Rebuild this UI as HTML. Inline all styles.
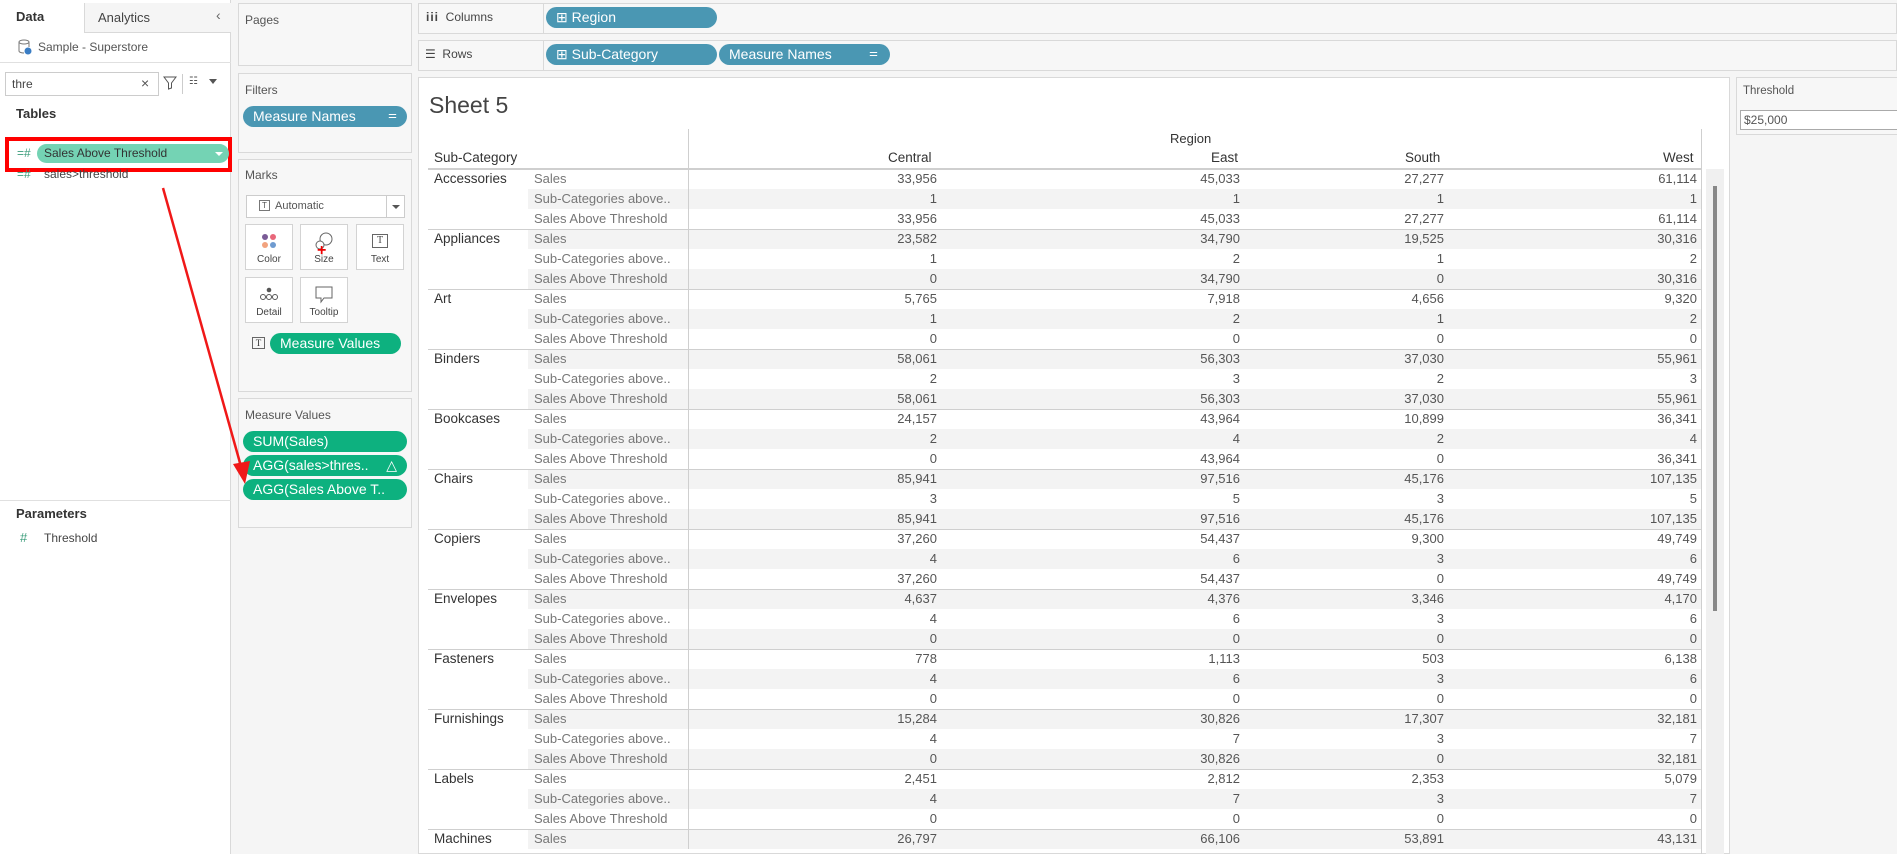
<!DOCTYPE html>
<html><head><meta charset="utf-8"><style>
*{box-sizing:border-box;margin:0;padding:0}
body{width:1897px;height:854px;overflow:hidden;background:#f5f5f5;font-family:"Liberation Sans",sans-serif;color:#333;position:relative}
.a{position:absolute}
.box{position:absolute;background:#f7f7f7;border:1px solid #d9d9d9}
.lbl{position:absolute;font-size:12px;color:#555}
.pill{position:absolute;border-radius:11px;color:#fff;font-size:14px;line-height:20px;padding-left:10px;white-space:nowrap;overflow:hidden}
.blue{background:#4a97b3}
.green{background:#0db17f}
.btn{position:absolute;width:48px;height:46px;border:1px solid #d3d3d3;background:#fff;font-size:10px;color:#444;text-align:center}
.btn span{position:absolute;bottom:4px;left:0;right:0}
table{position:absolute;left:428px;top:169px;border-collapse:collapse;table-layout:fixed;font-size:13px}
td{height:20px;padding:0 4px;white-space:nowrap;overflow:hidden;line-height:20px}
td.c{vertical-align:top;color:#333;font-size:13.5px;padding-left:6px;background:#fff}
td.m{color:#777;padding-left:6px}
td.n{text-align:right;color:#555}
tr.g td.m,tr.g td.n{background:#f3f3f3}
tr.f td{box-shadow:inset 0 1px #cfcfcf}
td.v{box-shadow:inset 1px 0 #cfcfcf}
tr.f td.v{box-shadow:inset 1px 1px #cfcfcf}
</style></head><body>
<!-- left panel -->
<div class="a" style="left:0;top:0;width:231px;height:854px;background:#fff;border-right:1px solid #d9d9d9"></div>
<div class="a" style="left:84px;top:3px;width:147px;height:30px;background:#f5f5f5;border-left:1px solid #d9d9d9;border-bottom:1px solid #d9d9d9"></div>
<div class="a" style="left:16px;top:9px;font-size:13px;font-weight:bold">Data</div>
<div class="a" style="left:98px;top:10px;font-size:13px;color:#444">Analytics</div>
<div class="a" style="left:216px;top:7px;font-size:14px;color:#666">‹</div>
<div class="a" style="left:0;top:62px;width:231px;height:1px;background:#e0e0e0"></div>
<svg class="a" style="left:18px;top:39px" width="14" height="16"><ellipse cx="6" cy="3" rx="5" ry="2" fill="none" stroke="#777"/><path d="M1 3v9c0 1 2 2 5 2M11 3v5" fill="none" stroke="#777"/><circle cx="10" cy="12" r="3.5" fill="#3a7dc4"/></svg>
<div class="a" style="left:38px;top:40px;font-size:12px;color:#555">Sample - Superstore</div>
<div class="a" style="left:5px;top:72px;width:154px;height:24px;border:1px solid #ccc;background:#fff"></div>
<div class="a" style="left:12px;top:77px;font-size:12px;color:#444">thre</div>
<div class="a" style="left:141px;top:75px;font-size:14px;color:#555">×</div>
<svg class="a" style="left:163px;top:76px" width="14" height="14"><path d="M1 1h12L8.5 7v5l-3 1V7z" fill="none" stroke="#555"/></svg>
<div class="a" style="left:182px;top:74px;width:1px;height:20px;background:#ccc"></div>
<div class="a" style="left:189px;top:76px;font-size:10px;color:#555;letter-spacing:-1px">☷</div>
<div class="a" style="left:209px;top:79px;width:0;height:0;border:4px solid transparent;border-top:5px solid #555"></div>
<div class="a" style="left:16px;top:106px;font-size:13px;font-weight:bold">Tables</div>
<div class="a" style="left:5px;top:137px;width:227px;height:35px;border:4px solid #f00"></div>
<div class="a" style="left:17px;top:146px;font-size:12px;color:#3a9c7a">=#</div>
<div class="a" style="left:37px;top:144px;width:192px;height:19px;border-radius:10px;background:#74d3b4;font-size:12px;line-height:19px;padding-left:7px;color:#333">Sales Above Threshold</div>
<div class="a" style="left:215px;top:152px;width:0;height:0;border:4px solid transparent;border-top:4px solid #fff"></div>
<div class="a" style="left:17px;top:167px;font-size:12px;color:#3a9c7a">=#</div>
<div class="a" style="left:44px;top:167px;font-size:12px;color:#444">sales&gt;threshold</div>
<div class="a" style="left:0;top:500px;width:231px;height:1px;background:#e0e0e0"></div>
<div class="a" style="left:16px;top:506px;font-size:13px;font-weight:bold">Parameters</div>
<div class="a" style="left:20px;top:530px;font-size:13px;color:#3a9c7a">#</div>
<div class="a" style="left:44px;top:531px;font-size:12px;color:#444">Threshold</div>
<!-- middle -->
<div class="box" style="left:238px;top:3px;width:174px;height:63px"></div>
<div class="lbl" style="left:245px;top:13px">Pages</div>
<div class="box" style="left:238px;top:73px;width:174px;height:80px"></div>
<div class="lbl" style="left:245px;top:83px">Filters</div>
<div class="pill blue" style="left:243px;top:106px;width:164px;height:21px">Measure Names<span style="position:absolute;right:10px;font-size:10px">⚌</span></div>
<div class="box" style="left:238px;top:159px;width:174px;height:233px"></div>
<div class="lbl" style="left:245px;top:168px">Marks</div>
<div class="a" style="left:246px;top:195px;width:159px;height:23px;border:1px solid #ccc;background:#fff"></div>
<div class="a" style="left:386px;top:196px;width:1px;height:21px;background:#ccc"></div>
<div class="a" style="left:392px;top:205px;border:4px solid transparent;border-top:4px solid #555"></div>
<div class="a" style="left:259px;top:200px;width:11px;height:11px;border:1px solid #777;font-size:8px;text-align:center;line-height:9px;color:#555">T</div>
<div class="a" style="left:275px;top:200px;font-size:11px;color:#555">Automatic</div>
<div class="btn" style="left:245px;top:224px"><svg style="margin-top:8px" width="16" height="16"><circle cx="4" cy="4" r="3" fill="#7a5b96"/><circle cx="12" cy="4" r="3" fill="#e8677a"/><circle cx="4" cy="12" r="3" fill="#f2a37e"/><circle cx="12" cy="12" r="3" fill="#6f9bd0"/></svg><span>Color</span></div>
<div class="btn" style="left:300px;top:224px"><svg style="margin-top:7px" width="18" height="18"><circle cx="11" cy="7" r="6" fill="none" stroke="#666"/><circle cx="5" cy="13" r="4" fill="#fff" stroke="#666"/></svg><span>Size</span><div class="a" style="left:16px;top:21px;color:#e00;font-size:16px;font-weight:bold;line-height:10px">+</div></div>
<div class="btn" style="left:356px;top:224px"><div style="margin:9px auto 0;width:16px;height:14px;border:1.5px solid #666;font-size:10px;line-height:11px;font-family:'Liberation Serif',serif">T</div><span>Text</span></div>
<div class="btn" style="left:245px;top:277px"><svg style="margin-top:8px" width="20" height="16"><circle cx="10" cy="4" r="2.3" fill="#555"/><circle cx="4" cy="11" r="2.5" fill="none" stroke="#555"/><circle cx="10" cy="11" r="2.5" fill="none" stroke="#555"/><circle cx="16" cy="11" r="2.5" fill="none" stroke="#555"/></svg><span>Detail</span></div>
<div class="btn" style="left:300px;top:277px"><svg style="margin-top:8px" width="18" height="18"><path d="M1 1h16v11H9l-3 4v-4H1z" fill="none" stroke="#666"/></svg><span>Tooltip</span></div>
<div class="a" style="left:252px;top:337px;width:13px;height:12px;border:1px solid #666;font-size:9px;line-height:10px;text-align:center;font-family:'Liberation Serif',serif">T</div>
<div class="pill green" style="left:270px;top:333px;width:131px;height:21px">Measure Values</div>
<div class="box" style="left:238px;top:398px;width:174px;height:130px"></div>
<div class="lbl" style="left:245px;top:408px">Measure Values</div>
<div class="pill green" style="left:243px;top:431px;width:164px;height:21px">SUM(Sales)</div>
<div class="pill green" style="left:243px;top:455px;width:164px;height:21px">AGG(sales&gt;thres..<span style="position:absolute;right:10px">△</span></div>
<div class="pill green" style="left:243px;top:479px;width:164px;height:21px">AGG(Sales Above T..</div>
<svg class="a" style="left:0;top:0;z-index:5" width="300" height="500"><line x1="163" y1="188" x2="242" y2="470" stroke="#f01818" stroke-width="2.5"/><path d="M233 464l12 20l5-23z" fill="#f01818"/></svg>
<!-- shelves -->
<div class="a" style="left:418px;top:3px;width:1479px;height:31px;background:#f7f7f7;border:1px solid #d9d9d9"></div>
<div class="a" style="left:543px;top:3px;width:1px;height:31px;background:#d9d9d9"></div>
<div class="a" style="left:426px;top:10px;font-size:12px;color:#444"><b style="letter-spacing:1px">iii</b>&nbsp; Columns</div>
<div class="pill blue" style="left:546px;top:7px;width:171px;height:21px">⊞ Region</div>
<div class="a" style="left:418px;top:40px;width:1479px;height:31px;background:#f7f7f7;border:1px solid #d9d9d9"></div>
<div class="a" style="left:543px;top:40px;width:1px;height:31px;background:#d9d9d9"></div>
<div class="a" style="left:425px;top:47px;font-size:12px;color:#444">☰&nbsp; Rows</div>
<div class="pill blue" style="left:546px;top:44px;width:171px;height:21px">⊞ Sub-Category</div>
<div class="pill blue" style="left:719px;top:44px;width:171px;height:21px">Measure Names<span style="position:absolute;right:12px;font-size:10px">⚌</span></div>
<!-- sheet -->
<div class="a" style="left:418px;top:77px;width:1312px;height:777px;background:#fff;border:1px solid #d9d9d9"></div>
<div class="a" style="left:429px;top:92px;font-size:23px;color:#444">Sheet 5</div>
<div class="a" style="left:688px;top:129px;width:1px;height:40px;background:#cfcfcf"></div>
<div class="a" style="left:1701px;top:129px;width:1px;height:725px;background:#cfcfcf"></div>
<div class="a" style="left:1170px;top:131px;font-size:13px;color:#333">Region</div>
<div class="a" style="left:434px;top:150px;font-size:13.5px;color:#333">Sub-Category</div>
<div class="a" style="left:888px;top:150px;font-size:13.5px;color:#333">Central</div>
<div class="a" style="left:1211px;top:150px;font-size:13.5px;color:#333">East</div>
<div class="a" style="left:1405px;top:150px;font-size:13.5px;color:#333">South</div>
<div class="a" style="left:1663px;top:150px;font-size:13.5px;color:#333">West</div>
<div class="a" style="left:428px;top:168px;width:1273px;height:1px;background:#cfcfcf"></div>
<div class="a" style="left:1706px;top:169px;width:18px;height:685px;background:#f0f0f0"></div>
<div class="a" style="left:1713px;top:186px;width:4px;height:425px;background:#888"></div>
<table>
<colgroup><col style="width:100px"><col style="width:160px"><col style="width:253px"><col style="width:303px"><col style="width:204px"><col style="width:253px"></colgroup>
<tr class="f"><td class="c" rowspan="3">Accessories</td><td class="m">Sales</td><td class="n v">33,956</td><td class="n">45,033</td><td class="n">27,277</td><td class="n">61,114</td></tr>
<tr class="g"><td class="m">Sub-Categories above..</td><td class="n v">1</td><td class="n">1</td><td class="n">1</td><td class="n">1</td></tr>
<tr><td class="m">Sales Above Threshold</td><td class="n v">33,956</td><td class="n">45,033</td><td class="n">27,277</td><td class="n">61,114</td></tr>
<tr class="f g"><td class="c" rowspan="3">Appliances</td><td class="m">Sales</td><td class="n v">23,582</td><td class="n">34,790</td><td class="n">19,525</td><td class="n">30,316</td></tr>
<tr><td class="m">Sub-Categories above..</td><td class="n v">1</td><td class="n">2</td><td class="n">1</td><td class="n">2</td></tr>
<tr class="g"><td class="m">Sales Above Threshold</td><td class="n v">0</td><td class="n">34,790</td><td class="n">0</td><td class="n">30,316</td></tr>
<tr class="f"><td class="c" rowspan="3">Art</td><td class="m">Sales</td><td class="n v">5,765</td><td class="n">7,918</td><td class="n">4,656</td><td class="n">9,320</td></tr>
<tr class="g"><td class="m">Sub-Categories above..</td><td class="n v">1</td><td class="n">2</td><td class="n">1</td><td class="n">2</td></tr>
<tr><td class="m">Sales Above Threshold</td><td class="n v">0</td><td class="n">0</td><td class="n">0</td><td class="n">0</td></tr>
<tr class="f g"><td class="c" rowspan="3">Binders</td><td class="m">Sales</td><td class="n v">58,061</td><td class="n">56,303</td><td class="n">37,030</td><td class="n">55,961</td></tr>
<tr><td class="m">Sub-Categories above..</td><td class="n v">2</td><td class="n">3</td><td class="n">2</td><td class="n">3</td></tr>
<tr class="g"><td class="m">Sales Above Threshold</td><td class="n v">58,061</td><td class="n">56,303</td><td class="n">37,030</td><td class="n">55,961</td></tr>
<tr class="f"><td class="c" rowspan="3">Bookcases</td><td class="m">Sales</td><td class="n v">24,157</td><td class="n">43,964</td><td class="n">10,899</td><td class="n">36,341</td></tr>
<tr class="g"><td class="m">Sub-Categories above..</td><td class="n v">2</td><td class="n">4</td><td class="n">2</td><td class="n">4</td></tr>
<tr><td class="m">Sales Above Threshold</td><td class="n v">0</td><td class="n">43,964</td><td class="n">0</td><td class="n">36,341</td></tr>
<tr class="f g"><td class="c" rowspan="3">Chairs</td><td class="m">Sales</td><td class="n v">85,941</td><td class="n">97,516</td><td class="n">45,176</td><td class="n">107,135</td></tr>
<tr><td class="m">Sub-Categories above..</td><td class="n v">3</td><td class="n">5</td><td class="n">3</td><td class="n">5</td></tr>
<tr class="g"><td class="m">Sales Above Threshold</td><td class="n v">85,941</td><td class="n">97,516</td><td class="n">45,176</td><td class="n">107,135</td></tr>
<tr class="f"><td class="c" rowspan="3">Copiers</td><td class="m">Sales</td><td class="n v">37,260</td><td class="n">54,437</td><td class="n">9,300</td><td class="n">49,749</td></tr>
<tr class="g"><td class="m">Sub-Categories above..</td><td class="n v">4</td><td class="n">6</td><td class="n">3</td><td class="n">6</td></tr>
<tr><td class="m">Sales Above Threshold</td><td class="n v">37,260</td><td class="n">54,437</td><td class="n">0</td><td class="n">49,749</td></tr>
<tr class="f g"><td class="c" rowspan="3">Envelopes</td><td class="m">Sales</td><td class="n v">4,637</td><td class="n">4,376</td><td class="n">3,346</td><td class="n">4,170</td></tr>
<tr><td class="m">Sub-Categories above..</td><td class="n v">4</td><td class="n">6</td><td class="n">3</td><td class="n">6</td></tr>
<tr class="g"><td class="m">Sales Above Threshold</td><td class="n v">0</td><td class="n">0</td><td class="n">0</td><td class="n">0</td></tr>
<tr class="f"><td class="c" rowspan="3">Fasteners</td><td class="m">Sales</td><td class="n v">778</td><td class="n">1,113</td><td class="n">503</td><td class="n">6,138</td></tr>
<tr class="g"><td class="m">Sub-Categories above..</td><td class="n v">4</td><td class="n">6</td><td class="n">3</td><td class="n">6</td></tr>
<tr><td class="m">Sales Above Threshold</td><td class="n v">0</td><td class="n">0</td><td class="n">0</td><td class="n">0</td></tr>
<tr class="f g"><td class="c" rowspan="3">Furnishings</td><td class="m">Sales</td><td class="n v">15,284</td><td class="n">30,826</td><td class="n">17,307</td><td class="n">32,181</td></tr>
<tr><td class="m">Sub-Categories above..</td><td class="n v">4</td><td class="n">7</td><td class="n">3</td><td class="n">7</td></tr>
<tr class="g"><td class="m">Sales Above Threshold</td><td class="n v">0</td><td class="n">30,826</td><td class="n">0</td><td class="n">32,181</td></tr>
<tr class="f"><td class="c" rowspan="3">Labels</td><td class="m">Sales</td><td class="n v">2,451</td><td class="n">2,812</td><td class="n">2,353</td><td class="n">5,079</td></tr>
<tr class="g"><td class="m">Sub-Categories above..</td><td class="n v">4</td><td class="n">7</td><td class="n">3</td><td class="n">7</td></tr>
<tr><td class="m">Sales Above Threshold</td><td class="n v">0</td><td class="n">0</td><td class="n">0</td><td class="n">0</td></tr>
<tr class="f g"><td class="c">Machines</td><td class="m">Sales</td><td class="n v">26,797</td><td class="n">66,106</td><td class="n">53,891</td><td class="n">43,131</td></tr>
</table>
<!-- threshold -->
<div class="a" style="left:1736px;top:77px;width:161px;height:58px;background:#f7f7f7;border:1px solid #d9d9d9;border-right:none"></div>
<div class="a" style="left:1743px;top:85px;font-size:11.5px;color:#555">Threshold</div>
<div class="a" style="left:1740px;top:110px;width:157px;height:20px;background:#fff;border:1px solid #aaa;border-right:none;font-size:12px;color:#555;padding:2px 3px">$25,000</div>
</body></html>
